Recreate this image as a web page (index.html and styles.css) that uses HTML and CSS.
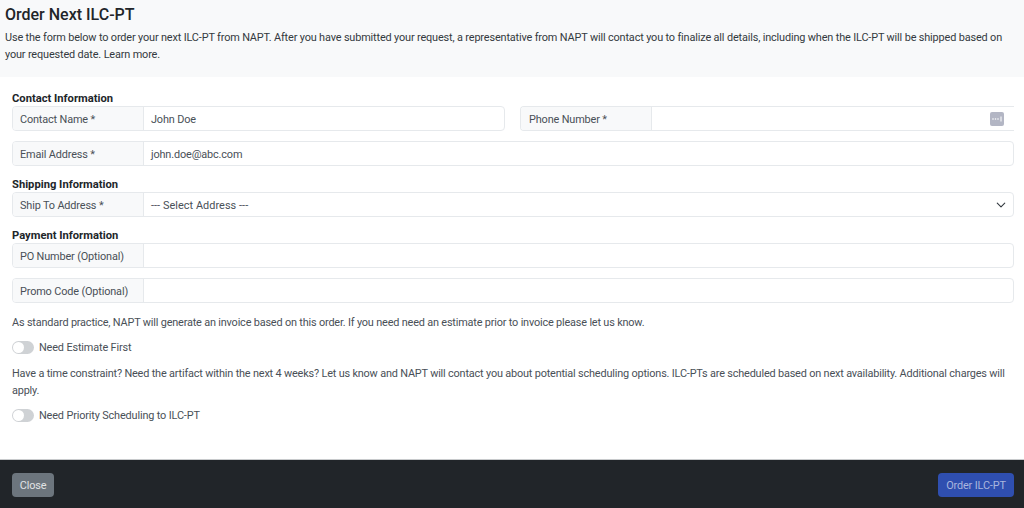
FILE: index.html
```html
<!DOCTYPE html>
<html lang="en">
<head>
<meta charset="utf-8">
<title>Order Next ILC-PT</title>
<link rel="stylesheet" href="styles.css">
</head>
<body>
<div class="modal">
  <header class="intro">
    <h1>Order Next ILC-PT</h1>
    <p>Use the form below to order your next ILC-PT from NAPT. After you have submitted your request, a representative from NAPT will contact you to finalize all details, including when the ILC-PT will be shipped based on your requested date. Learn more.</p>
  </header>
  <main class="form">
    <h2 class="first">Contact Information</h2>
    <div class="two">
      <div class="group"><span class="label">Contact Name *</span><span class="field">John Doe</span></div>
      <div class="group open"><span class="label">Phone Number *</span><span class="field phone">
        <svg class="key" width="14" height="14" viewBox="0 0 14 14"><rect width="14" height="14" rx="2" fill="#b3b6c4"/><circle cx="3" cy="7" r="0.8" fill="#fff"/><circle cx="5.5" cy="7" r="0.8" fill="#fff"/><circle cx="8" cy="7" r="0.8" fill="#fff"/><rect x="10.5" y="4.5" width="1" height="5" fill="#fff"/></svg>
      </span></div>
    </div>
    <div class="group gap"><span class="label">Email Address *</span><span class="field">john.doe@abc.com</span></div>
    <h2>Shipping Information</h2>
    <div class="group"><span class="label">Ship To Address *</span><span class="field select">--- Select Address ---
      <svg width="10" height="10" viewBox="0 0 16 16"><path d="M2 5l6 6 6-6" fill="none" stroke="#343a40" stroke-width="1.8" stroke-linecap="round" stroke-linejoin="round"/></svg>
    </span></div>
    <h2>Payment Information</h2>
    <div class="group"><span class="label">PO Number (Optional)</span><span class="field"></span></div>
    <div class="group gap"><span class="label">Promo Code (Optional)</span><span class="field"></span></div>
    <p class="note n1">As standard practice, NAPT will generate an invoice based on this order. If you need need an estimate prior to invoice please let us know.</p>
    <div class="switch"><span class="track"><span class="knob"></span></span>Need Estimate First</div>
    <p class="note n2">Have a time constraint? Need the artifact within the next 4 weeks? Let us know and NAPT will contact you about potential scheduling options. ILC-PTs are scheduled based on next availability. Additional charges will apply.</p>
    <div class="switch"><span class="track"><span class="knob"></span></span>Need Priority Scheduling to ILC-PT</div>
  </main>
  <footer class="bar">
    <button class="btn close">Close</button>
    <button class="btn order">Order ILC-PT</button>
  </footer>
</div>
</body>
</html>
```
FILE: styles.css
```css
* { box-sizing: border-box; }
html, body { margin: 0; height: 100%; }
body { font-family: Roboto, "Open Sans", sans-serif; font-size: 10.9px; letter-spacing: -0.15px; line-height: 17px; color: #343a40; background: #fff; overflow: hidden; }
.modal { height: 508px; display: flex; flex-direction: column; }
.intro { height: 77px; background: #f8f9fa; padding: 5px 5px 0; }
.intro h1 { margin: 0 0 5px; font-size: 16px; letter-spacing: 0; line-height: 19px; font-weight: 500; color: #212529; }
.intro p { margin: 0; color: #343a40; }
.form { flex: 1; padding: 0 10px 0 12px; }
h2 { margin: 10px 0 0; font-size: 11.2px; letter-spacing: 0; line-height: 17px; font-weight: 700; color: #212529; height: 16px; }
h2.first { margin-top: 13px; }
.two { display: flex; gap: 15px; }
.two .group { flex: 1; }
.two .group:first-child { flex: 0 0 493px; }
.group { display: flex; height: 25px; border: 1px solid #e6e9ec; border-radius: 4px; overflow: hidden; background: #fff; }
.open { border-right: 0; border-radius: 4px 0 0 4px; }
.open .label { padding-left: 8px; }
.gap { margin-top: 10px; }
.label { flex: none; width: 131px; display: flex; align-items: center; padding: 1px 0 0 7px; background: #f8f9fa; border-right: 1px solid #e6e9ec; color: #495057; }
.field { flex: 1; display: flex; align-items: center; justify-content: space-between; padding: 1px 7px 0 7px; color: #495057; }
.select { letter-spacing: 0.05px; }
.phone { justify-content: flex-end; padding-right: 10px; }
.note { margin: 0; color: #495057; letter-spacing: -0.18px; }
.n1 { margin-top: 11px; }
.n2 { margin-top: 9px; }
.switch { display: flex; align-items: center; margin-top: 8px; height: 17px; color: #495057; }
.track { width: 22px; height: 13px; border-radius: 7px; background: #cfd2d5; margin-right: 5px; padding: 1px; }
.knob { display: block; width: 11px; height: 11px; border-radius: 50%; background: #fff; }
.bar { height: 49px; background: #212529; border-top: 1px solid #c8cacc; display: flex; justify-content: space-between; align-items: center; padding: 2px 10px 0 12px; }
.btn { height: 24px; border: 0; border-radius: 4px; font: inherit; letter-spacing: inherit; padding: 0; }
.close { width: 42px; background: #6c757d; color: #e1e3e5; }
.order { width: 76px; background: #2f4fb0; color: #a9b6de; }
```
